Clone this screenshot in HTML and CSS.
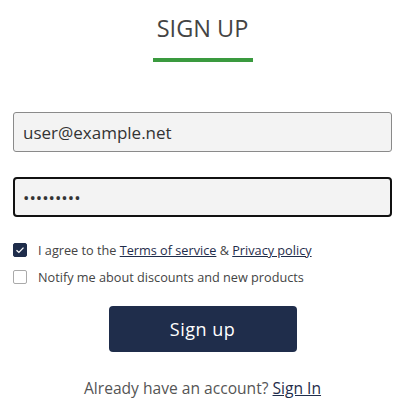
FILE: index.html
```html
<!DOCTYPE html>
<html>
<head>
<meta charset="utf-8">
<link rel="stylesheet" href="styles.css">
</head>
<body>
<div class="page">
  <h1 class="title">SIGN UP</h1>
  <div class="title-bar"></div>
  <form class="form">
    <input class="field" type="email" value="user@example.net">
    <input class="field field-focus" type="password" value="123456789">
    <div class="checks">
      <label class="check">
        <span class="box box-on"><svg width="10" height="8" viewBox="0 0 10 8"><path d="M1.5 4.2 L3.9 6.4 L8.5 1.6" fill="none" stroke="#fff" stroke-width="1.3"/></svg></span>
        <span>I agree to the <a class="link" href="#">Terms of service</a> &amp; <a class="link" href="#">Privacy policy</a></span>
      </label>
      <label class="check">
        <span class="box"></span>
        <span>Notify me about discounts and new products</span>
      </label>
    </div>
    <button class="submit" type="button">Sign up</button>
  </form>
  <p class="footer">Already have an account? <a class="link" href="#">Sign In</a></p>
</div>
</body>
</html>
```

FILE: styles.css
```css
html, body {
  margin: 0;
  padding: 0;
  background: #fff;
}
body {
  font-family: "Open Sans", "Noto Sans", sans-serif;
  color: #444;
}
.page {
  padding: 12px 13px 0;
  display: flex;
  flex-direction: column;
  align-items: center;
}
.title {
  margin: 0;
  font-size: 23.5px;
  line-height: 32px;
  font-weight: 400;
  color: #444;
}
.title-bar {
  width: 100px;
  height: 4px;
  background: #3a9a3f;
  margin-top: 14px;
}
.form {
  width: 100%;
  display: flex;
  flex-direction: column;
  align-items: center;
  margin-top: 50px;
}
.field {
  box-sizing: border-box;
  width: 100%;
  height: 40px;
  margin: 0 0 25px;
  padding: 0 9px;
  border: 1px solid #8a8a8a;
  border-radius: 3px;
  background: #f3f3f3;
  font-family: "Open Sans", sans-serif;
  font-size: 17px;
  color: #333;
  outline: none;
}
.field-focus {
  border: 2px solid #111;
  padding: 0 8px;
  border-radius: 4px;
}
.checks {
  width: 100%;
  display: flex;
  flex-direction: column;
  gap: 7px;
  margin-top: -2px;
}
.check {
  display: flex;
  align-items: center;
  gap: 11px;
  font-size: 12.7px;
  line-height: 20px;
  color: #444;
}
.box {
  box-sizing: border-box;
  width: 14px;
  height: 14px;
  border: 1px solid #aaa;
  border-radius: 2px;
  background: #fff;
  display: flex;
  align-items: center;
  justify-content: center;
  flex: none;
}
.box-on {
  background: #1f2d4b;
  border-color: #1f2d4b;
}
.link {
  color: #1f2d4b;
  text-decoration: underline;
}
.submit {
  margin-top: 19px;
  width: 188px;
  height: 46px;
  border: none;
  border-radius: 4px;
  background: #1f2d4b;
  color: #fff;
  font-family: "Open Sans", sans-serif;
  font-size: 18px;
  letter-spacing: 0.5px;
}
.footer {
  margin: 24px 0 0;
  font-size: 15.6px;
  line-height: 24px;
  color: #555;
}
```
